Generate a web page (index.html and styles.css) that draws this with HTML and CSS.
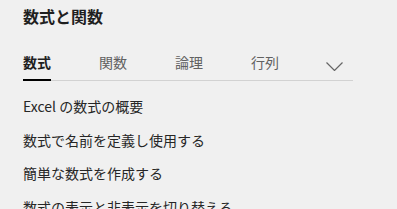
FILE: index.html
```html
<!DOCTYPE html>
<html lang="ja">
<head>
<meta charset="utf-8">
<link rel="stylesheet" href="styles.css">
</head>
<body>
<div class="panel">
  <h1 class="title">数式と関数</h1>
  <div class="tabbar">
    <div class="tabs">
      <span class="tab active">数式</span>
      <span class="tab">関数</span>
      <span class="tab">論理</span>
      <span class="tab">行列</span>
    </div>
    <svg class="chevron" width="17" height="9" viewBox="0 0 17 9"><path d="M0.5 0.5 L8.5 8.5 L16.5 0.5" fill="none" stroke="#666" stroke-width="1.2"/></svg>
  </div>
  <ul class="links">
    <li>Excel の数式の概要</li>
    <li>数式で名前を定義し使用する</li>
    <li>簡単な数式を作成する</li>
    <li>数式の表示と非表示を切り替える</li>
  </ul>
</div>
</body>
</html>
```
FILE: styles.css
```css
html, body {
  margin: 0;
  padding: 0;
  background: #f0f0f0;
  font-family: "Noto Sans CJK JP", "Noto Sans", sans-serif;
  color: #262626;
  overflow: hidden;
}
.panel {
  padding: 0 0 0 23px;
  width: 330px;
}
.title {
  margin: 0;
  padding-top: 4px;
  font-size: 16px;
  font-weight: 700;
  line-height: 24px;
  color: #1f1f1f;
}
.tabbar {
  position: relative;
  margin-top: 24px;
  border-bottom: 1px solid #d2d2d2;
}
.tabs {
  display: flex;
  gap: 48px;
}
.tab {
  font-size: 14px;
  line-height: 20px;
  color: #616161;
  padding-bottom: 7px;
  border-bottom: 2px solid transparent;
  margin-bottom: -1px;
}
.tab.active {
  color: #1f1f1f;
  font-weight: 700;
  border-bottom-color: #000;
}
.chevron {
  position: absolute;
  right: 10px;
  top: 10px;
}
.links {
  list-style: none;
  margin: 0;
  padding: 0;
  padding-top: 15px;
}
.links li {
  font-size: 14px;
  line-height: 20px;
  margin-bottom: 13.5px;
  color: #262626;
  white-space: nowrap;
}
```
